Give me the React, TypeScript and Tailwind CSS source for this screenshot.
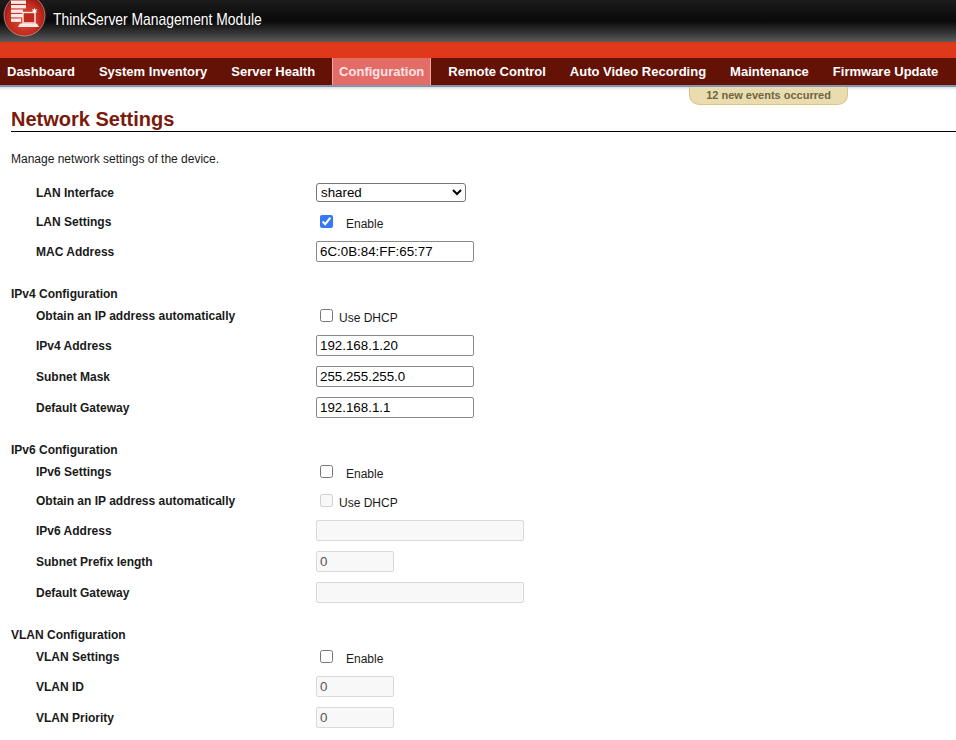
const navItems = [
  "Dashboard",
  "System Inventory",
  "Server Health",
  "Configuration",
  "Remote Control",
  "Auto Video Recording",
  "Maintenance",
  "Firmware Update",
]

function Logo() {
  return (
    <svg width="46" height="38" viewBox="0 0 46 38" className="absolute left-[2px] top-0">
      <defs>
        <radialGradient id="ball" cx="50%" cy="58%" r="62%">
          <stop offset="0%" stopColor="#e2503c" />
          <stop offset="65%" stopColor="#bf2a1d" />
          <stop offset="100%" stopColor="#7c120c" />
        </radialGradient>
      </defs>
      <circle cx="22.5" cy="15.5" r="20.5" fill="url(#ball)" stroke="#e9b9b0" strokeWidth="0.6" />
      <g fill="#fbe9e6">
        <rect x="9" y="0.5" width="15" height="3.4" />
        <rect x="9" y="5" width="15" height="3.4" />
        <rect x="9" y="9.5" width="12" height="3.4" />
        <rect x="9" y="14" width="12" height="3.4" />
        <rect x="9" y="18.5" width="10" height="3.4" />
        <path d="M18 23.5h17l2 3.5H16z" />
      </g>
      <rect x="21" y="12.5" width="12" height="10.5" fill="#bf2a1d" stroke="#fbe9e6" strokeWidth="1.4" />
      <path
        d="M32.5 7.5l.7 2.2 2.2-.7-1.4 1.9 1.4 1.9-2.2-.7-.7 2.2-.7-2.2-2.2.7 1.4-1.9-1.4-1.9 2.2.7z"
        fill="#fff"
      />
    </svg>
  )
}

function Row({ label, height, children }: { label: string; height: string; children: React.ReactNode }) {
  return (
    <div className={`flex items-center pl-[36px] ${height}`}>
      <div className="w-[280px] text-[12px] font-bold text-[#1a1a1a]">{label}</div>
      <div className="flex items-center">{children}</div>
    </div>
  )
}

function Heading({ children, className }: { children: React.ReactNode; className: string }) {
  return <div className={`pl-[11px] text-[12px] font-bold leading-[14px] text-[#1a1a1a] ${className}`}>{children}</div>
}

function TextBox({ value }: { value: string }) {
  return (
    <input
      readOnly
      value={value}
      className="h-[21px] w-[158px] rounded-[2px] border border-[#8a8a8a] bg-white px-[3px] text-[13.33px] text-black outline-none"
    />
  )
}

function OffBox({ value, wide }: { value: string; wide?: boolean }) {
  return (
    <input
      disabled
      value={value}
      className={`h-[21px] rounded-[2px] border border-[#d9d9d9] bg-[#f8f8f8] px-[3px] text-[13.33px] text-[#555] outline-none ${wide ? "w-[208px]" : "w-[78px]"}`}
    />
  )
}

function Check({ label, checked, disabled, gap }: { label: string; checked?: boolean; disabled?: boolean; gap: string }) {
  return (
    <div className="flex items-center pl-[4px]">
      <input
        type="checkbox"
        readOnly
        checked={!!checked}
        disabled={disabled}
        className="m-0 h-[13px] w-[13px] accent-[#3478f6]"
      />
      <span className={`translate-y-[2px] text-[12px] text-[#1a1a1a] ${gap}`}>{label}</span>
    </div>
  )
}

export default function App() {
  return (
    <div className="h-[740px] w-[956px] overflow-hidden bg-white font-['Liberation_Sans',Arial,sans-serif]">
      <header className="relative">
        <div className="relative h-[42px] bg-gradient-to-b from-[#1c1c1c] via-[#0a0a0a] to-[#5c5c5c]">
          <Logo />
          <div className="absolute left-[53px] top-[10px] origin-left scale-x-[0.815] whitespace-nowrap text-[17px] leading-[20px] text-white">
            ThinkServer Management Module
          </div>
        </div>
        <div className="h-[16px] bg-[#e0381b]" />
        <nav className="flex h-[27px] gap-[10px] bg-[#641206]">
          {navItems.map((item) => (
            <div
              key={item}
              className={`flex items-center text-[13px] font-bold ${
                item === "Configuration"
                  ? "border-x border-[#f0a9a3] bg-[#e46c66] px-[6px] text-[#fbe3e6]"
                  : "px-[7px] text-white"
              }`}
            >
              {item}
            </div>
          ))}
        </nav>
        <div className="h-[2px] bg-[#8496ad]" />
        <div className="h-[3px] bg-gradient-to-b from-[#dcdcdc] to-white" />
        <div className="absolute left-[689px] top-[87px] flex h-[18px] w-[159px] items-center justify-center rounded-b-[10px] border border-t-0 border-[#d9c588] bg-[#e8dcb0] text-[11px] font-bold text-[#6f6540]">
          12 new events occurred
        </div>
      </header>

      <main>
        <h1 className="ml-[11px] mt-[17px] border-b border-black text-[20px] font-bold leading-[24px] text-[#7a1a0c]">
          Network Settings
        </h1>
        <p className="ml-[11px] mt-[20px] text-[12px] leading-[14px] text-[#1a1a1a]">
          Manage network settings of the device.
        </p>

        <div className="mt-[12px]">
          <Row label="LAN Interface" height="h-[29px]">
            <select className="h-[19px] w-[150px] rounded-[3px] border border-[#767676] bg-white text-[13.33px] text-black">
              <option>shared</option>
            </select>
          </Row>
          <Row label="LAN Settings" height="h-[29px]">
            <Check label="Enable" checked gap="ml-[13px]" />
          </Row>
          <Row label="MAC Address" height="h-[31px]">
            <TextBox value="6C:0B:84:FF:65:77" />
          </Row>
        </div>

        <Heading className="mt-[20px]">IPv4 Configuration</Heading>
        <div>
          <Row label="Obtain an IP address automatically" height="h-[29px]">
            <Check label="Use DHCP" gap="ml-[6px]" />
          </Row>
          <Row label="IPv4 Address" height="h-[31px]">
            <TextBox value="192.168.1.20" />
          </Row>
          <Row label="Subnet Mask" height="h-[31px]">
            <TextBox value="255.255.255.0" />
          </Row>
          <Row label="Default Gateway" height="h-[31px]">
            <TextBox value="192.168.1.1" />
          </Row>
        </div>

        <Heading className="mt-[20px]">IPv6 Configuration</Heading>
        <div>
          <Row label="IPv6 Settings" height="h-[29px]">
            <Check label="Enable" gap="ml-[13px]" />
          </Row>
          <Row label="Obtain an IP address automatically" height="h-[29px]">
            <Check label="Use DHCP" disabled gap="ml-[6px]" />
          </Row>
          <Row label="IPv6 Address" height="h-[31px]">
            <OffBox value="" wide />
          </Row>
          <Row label="Subnet Prefix length" height="h-[31px]">
            <OffBox value="0" />
          </Row>
          <Row label="Default Gateway" height="h-[31px]">
            <OffBox value="" wide />
          </Row>
        </div>

        <Heading className="mt-[20px]">VLAN Configuration</Heading>
        <div>
          <Row label="VLAN Settings" height="h-[29px]">
            <Check label="Enable" gap="ml-[13px]" />
          </Row>
          <Row label="VLAN ID" height="h-[31px]">
            <OffBox value="0" />
          </Row>
          <Row label="VLAN Priority" height="h-[31px]">
            <OffBox value="0" />
          </Row>
        </div>
      </main>
    </div>
  )
}
